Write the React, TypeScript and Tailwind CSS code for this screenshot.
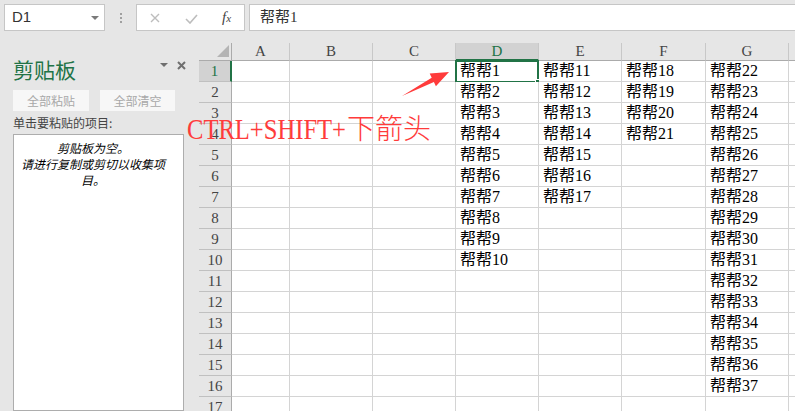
import React from "react";

const cols = ["A", "B", "C", "D", "E", "F", "G", "H"];
const ranges: Record<string, [number, number]> = {
  D: [1, 10],
  E: [11, 17],
  F: [18, 21],
  G: [22, 37],
};

function cellText(col: string, row: number) {
  const r = ranges[col];
  if (!r) return "";
  const n = r[0] + row - 1;
  return n <= r[1] ? `帮帮${n}` : "";
}

function TopBar() {
  return (
    <div className="flex h-[31px] pt-[4px] pl-[4px]">
      <div className="w-[101px] h-[27px] bg-white border border-[#c6c6c6] flex items-center justify-between pl-[7px] pr-[5px]">
        <span className="text-[15px] text-[#333] font-['Liberation_Sans',sans-serif]">D1</span>
        <svg width="8" height="4">
          <polygon points="0,0 8,0 4,4" fill="#7a7a7a" />
        </svg>
      </div>
      <div className="w-[31px] flex flex-col items-center pt-[9px] gap-[2px]">
        <div className="w-[2px] h-[2px] bg-[#a0a0a0]" />
        <div className="w-[2px] h-[2px] bg-[#a0a0a0]" />
        <div className="w-[2px] h-[2px] bg-[#a0a0a0]" />
      </div>
      <div className="w-[109px] h-[27px] bg-white border border-[#c6c6c6] flex items-center pl-[13px]">
        <svg width="10" height="10">
          <path d="M1 1 L9 9 M9 1 L1 9" stroke="#bdbdbd" strokeWidth="1.4" />
        </svg>
        <svg width="13" height="10" className="ml-[25px] mt-[3px]">
          <path d="M1 5 L5 9 L12 1" stroke="#bdbdbd" strokeWidth="1.6" fill="none" />
        </svg>
        <span className="ml-[24px] text-[15px] italic text-[#444] font-['Liberation_Serif',serif] leading-none">
          f<span className="text-[11px]">x</span>
        </span>
      </div>
      <div className="ml-[4px] flex-1 h-[27px] bg-white border border-r-0 border-[#c6c6c6] pl-[10px] flex items-center text-[15px] text-[#333] font-['Liberation_Serif','Noto_Sans_CJK_SC',serif]">
        帮帮1
      </div>
    </div>
  );
}

function ClipboardPane() {
  return (
    <div className="w-[199px] pl-[13px] pr-[15px] flex flex-col font-['Noto_Sans_CJK_SC',sans-serif]">
      <div className="mt-[25px] h-[26px] w-[175px] flex items-center justify-between pr-[2px]">
        <span className="text-[21px] leading-none text-[#217346]">剪贴板</span>
        <div className="flex items-center gap-[9px] mb-[8px]">
          <svg width="8" height="4">
            <polygon points="0,0 8,0 4,4" fill="#6f6f6f" />
          </svg>
          <svg width="9" height="9">
            <path d="M1 1 L8 8 M8 1 L1 8" stroke="#6f6f6f" strokeWidth="2" />
          </svg>
        </div>
      </div>
      <div className="mt-[8px] flex gap-[11px]">
        <div className="w-[76px] h-[21px] bg-[#f7f7f7] flex items-center justify-center text-[12px] text-[#a8a8a8]">
          全部粘贴
        </div>
        <div className="w-[75px] h-[21px] bg-[#f7f7f7] flex items-center justify-center text-[12px] text-[#a8a8a8]">
          全部清空
        </div>
      </div>
      <div className="mt-[4px] text-[12px] leading-[16px] text-[#444]">单击要粘贴的项目:</div>
      <div className="mt-[3px] flex-1 bg-white border border-[#adadad] pl-[5px] pr-[16px] pt-[5px] text-[12px] leading-[16px] italic text-center text-black">
        剪贴板为空。
        <br />
        请进行复制或剪切以收集项目。
      </div>
    </div>
  );
}

function Sheet() {
  const rows = Array.from({ length: 17 }, (_, i) => i + 1);
  return (
    <div className="flex-1 pt-[12px] overflow-hidden">
      <div className="grid grid-cols-[33px_58px_83px_83px_83px_83px_84px_83px_100px] grid-rows-[18px_repeat(17,21px)] font-['Liberation_Serif','Noto_Sans_CJK_SC',serif]">
        <div className="relative border-r border-b border-[#ababab]">
          <svg width="12" height="12" className="absolute right-[2px] bottom-[3px]">
            <polygon points="12,0 12,12 0,12" fill="#b4b4b4" />
          </svg>
        </div>
        {cols.map((c) => (
          <div
            key={c}
            className={`flex items-center justify-center text-[15px] leading-none border-r border-r-[#c8c8c8] ${
              c === "D"
                ? "bg-[#d2d2d2] text-[#217346] border-b-2 border-b-[#217346]"
                : "text-[#444] border-b border-b-[#ababab]"
            }`}
          >
            {c === "H" ? "" : c}
          </div>
        ))}
        {rows.map((r) => (
          <React.Fragment key={r}>
            <div
              className={`flex items-end justify-center pb-[2px] text-[15px] leading-none border-b border-b-[#c0c0c0] ${
                r === 1
                  ? "bg-[#d2d2d2] text-[#217346] border-r-2 border-r-[#217346]"
                  : "text-[#444] border-r border-r-[#ababab]"
              }`}
            >
              {r}
            </div>
            {cols.map((c) => (
              <div
                key={c}
                className="relative bg-white border-r border-b border-[#d4d4d4] pl-[4px] text-[16px] leading-[20px] text-black whitespace-nowrap"
              >
                {cellText(c, r)}
                {c === "D" && r === 1 && (
                  <div className="absolute -left-[1px] -top-[1px] -right-[1px] -bottom-[2px] border-2 border-[#217346]">
                    <div className="absolute -right-[4px] -bottom-[4px] w-[6px] h-[6px] bg-[#217346] border border-white" />
                  </div>
                )}
              </div>
            ))}
          </React.Fragment>
        ))}
      </div>
    </div>
  );
}

export default function App() {
  return (
    <div className="relative w-[795px] h-[411px] overflow-hidden bg-[#e6e6e6]">
      <TopBar />
      <div className="flex h-[380px]">
        <ClipboardPane />
        <Sheet />
      </div>
      {/* annotation over the sheet */}
      <div className="absolute left-[187px] top-[113px] flex items-baseline leading-none text-[#ff3b3b] whitespace-nowrap">
        <span className="inline-block shrink-0 w-[160px]">
          <span className="inline-block origin-left scale-x-[0.82] text-[30px] font-['Liberation_Serif',serif]">
            CTRL+SHIFT+
          </span>
        </span>
        <span className="text-[28px] font-['Noto_Sans_CJK_SC',sans-serif] font-light">下箭头</span>
      </div>
      <svg className="absolute left-0 top-0 pointer-events-none" width="795" height="411">
        <polygon
          points="402,96 431.7,77.7 429.7,73.6 449,72 435.9,86.2 433.9,82.1"
          fill="#ff3b3b"
        />
      </svg>
    </div>
  );
}
